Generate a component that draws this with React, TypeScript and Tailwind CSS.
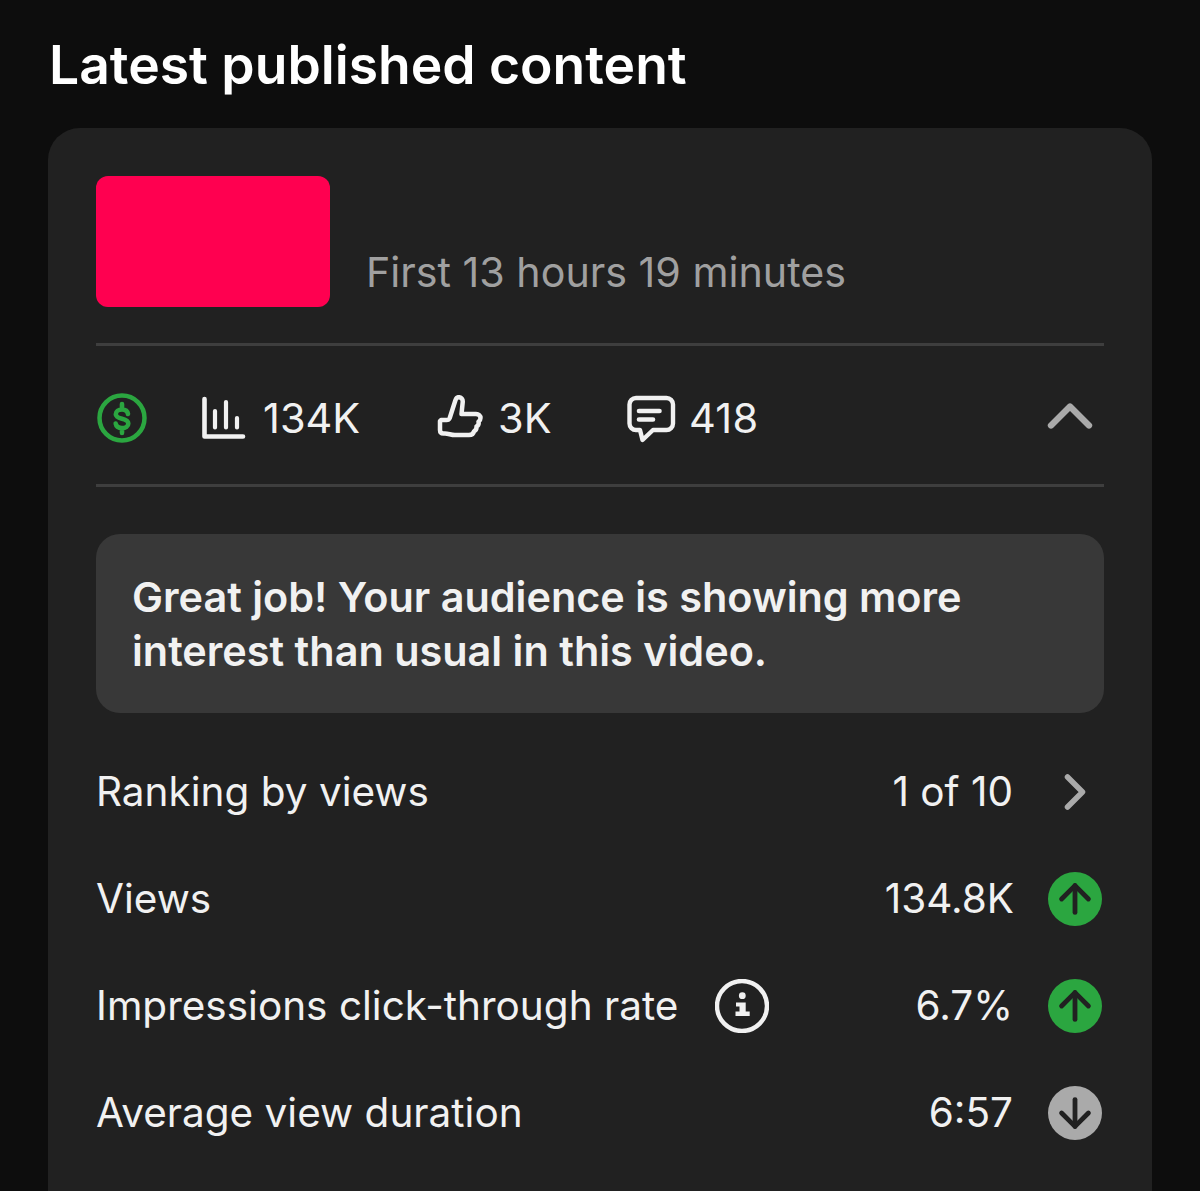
import { ChevronRight, ChevronUp, ArrowUp, ArrowDown } from "lucide-react";

function DollarIcon() {
  return (
    <svg viewBox="0 0 50 50" className="w-[50px] h-[50px]" fill="none">
      <circle cx="25" cy="25" r="22.5" stroke="#2ba640" strokeWidth="4.5" />
      <path
        d="M31 21c-.5-3-3-4.500-6-4.500-3.500 0-6.200 1.800-6.200 4.700 0 2.800 2.500 3.600 6.200 4.500 3.700.9 6.300 1.900 6.300 4.700 0 2.900-2.700 4.600-6.300 4.600-3.200 0-5.800-1.500-6.300-4.400M25 11v5.500M25 35v5"
        stroke="#2ba640"
        strokeWidth="4.600"
        strokeLinecap="round"
      />
    </svg>
  );
}

function BarsIcon() {
  return (
    <svg viewBox="0 0 46 46" className="w-[46px] h-[46px]" fill="none" stroke="#f1f1f1" strokeLinecap="round">
      <path d="M3.500 4v37.500H42" strokeWidth="4.600" strokeLinejoin="round" />
      <path d="M14 16v16.500M25 7v25.500M36 23v9.500" strokeWidth="4.200" />
    </svg>
  );
}

function ThumbIcon() {
  return (
    <svg viewBox="0 0 46 46" className="w-[46px] h-[46px]" fill="none" stroke="#f1f1f1" strokeWidth="4.500" strokeLinejoin="round" strokeLinecap="round">
      <path d="M4 25h5.500c1.500 0 2.700-.8 3.300-2.200L18.500 5c.7-1.800 2-3 3.700-2.800 2.300.3 3.800 2.400 3.500 5L24.500 19H39c2.800 0 4.500 1.700 4.500 4 0 1.800-1 3-2 3.800.5 2-.5 3.800-2 4.700.2 2.200-.8 4-2.500 4.800-.5 2.500-2 3.700-5 3.700H18c-4 0-6.500-1.500-10-1.500H6.500C4 38.500 3 37 3 35V26z" />
    </svg>
  );
}

function CommentIcon() {
  return (
    <svg viewBox="0 0 52 52" className="w-[52px] h-[52px]" fill="none" stroke="#f1f1f1" strokeLinecap="round" strokeLinejoin="round">
      <path
        d="M11 6h30.500a6.500 6.500 0 0 1 6.500 6.500v19a6.500 6.500 0 0 1-6.500 6.500H28L17.500 48 15 38h-4a6.500 6.500 0 0 1-6.500-6.500v-19A6.500 6.500 0 0 1 11 6z"
        strokeWidth="4.400"
      />
      <path d="M14 19h20.500M14 27.500h14" strokeWidth="4.600" />
    </svg>
  );
}

function InfoIcon() {
  return (
    <svg viewBox="0 0 54 54" className="w-[54px] h-[54px]" fill="none">
      <circle cx="27" cy="27" r="25" stroke="#f1f1f1" strokeWidth="4.400" />
      <circle cx="27.300" cy="16.700" r="3.400" fill="#f1f1f1" />
      <path d="M21 23.500h9.700v9h4v4.500H20.500v-4.500h4v-5H21z" fill="#f1f1f1" />
    </svg>
  );
}

function Trend({ up }: { up: boolean }) {
  return (
    <div className={`w-[54px] h-[54px] rounded-full flex items-center justify-center ${up ? "bg-[#2ba640]" : "bg-[#aaaaaa]"}`}>
      {up ? (
        <ArrowUp className="w-[46px] h-[46px] text-[#212121]" strokeWidth={2.500} />
      ) : (
        <ArrowDown className="w-[46px] h-[46px] text-[#212121]" strokeWidth={2.500} />
      )}
    </div>
  );
}

export default function App() {
  return (
    <div className="h-[1191px] overflow-hidden bg-[#0d0d0d] font-['Inter',sans-serif] text-[#f1f1f1]">
      <h1 className="pl-[49px] pt-[30px] h-[128px] text-[53.4px] leading-[70px] font-semibold text-white">
        Latest published content
      </h1>

      <div className="mx-[48px] rounded-[32px] bg-[#212121] px-[48px] pt-[48px] pb-[60px]">
        {/* Video header */}
        <div className="flex items-end gap-[36px] pb-[36px] border-b-[3px] border-[#3e3e3e]">
          <div className="w-[234px] h-[131px] rounded-[12px] bg-[#ff0050]" />
          <span className="text-[41.2px] leading-[50px] mb-[10px] text-[#a0a0a0]">First 13 hours 19 minutes</span>
        </div>

        {/* Stats row */}
        <div className="h-[141px] pt-[6px] flex items-center border-b-[3px] border-[#3e3e3e] text-[41.5px]">
          <div className="ml-[1px] w-[104px]">
            <DollarIcon />
          </div>
          <div className="flex items-center gap-[16px] w-[236px]">
            <BarsIcon />
            <span>134K</span>
          </div>
          <div className="flex items-center gap-[15px] w-[188px]">
            <ThumbIcon />
            <span>3K</span>
          </div>
          <div className="flex items-center gap-[12px]">
            <CommentIcon />
            <span className="tracking-[0.3px]">418</span>
          </div>
          <ChevronUp className="ml-auto -mr-[4px] -mt-[4px] w-[76px] h-[76px] text-[#aaaaaa]" strokeWidth={2} />
        </div>

        {/* Insight */}
        <div className="mt-[47px] rounded-[24px] bg-[#383838] px-[36px] py-[36px] text-[41.4px] leading-[54px] font-semibold h-[179px]">
          Great job! Your audience is showing more
          <br />
          interest than usual in this video.
        </div>

        {/* Metrics */}
        <div className="mt-[25px] text-[40.5px] [&_span]:pt-[2px]">
          <div className="h-[107px] flex items-center">
            <span>Ranking by views</span>
            <span className="ml-auto mr-[35px]">1 of 10</span>
            <div className="w-[54px] mr-[2px] flex justify-center">
              <ChevronRight className="w-[60px] h-[60px] shrink-0 text-[#aaaaaa]" strokeWidth={2.200} />
            </div>
          </div>
          <div className="h-[107px] flex items-center">
            <span>Views</span>
            <span className="ml-auto mr-[34px]">134.8K</span>
            <div className="mr-[2px]">
              <Trend up />
            </div>
          </div>
          <div className="h-[107px] flex items-center">
            <span>Impressions click-through rate</span>
            <div className="ml-[37px]">
              <InfoIcon />
            </div>
            <span className="ml-auto mr-[35px]">6.7%</span>
            <div className="mr-[2px]">
              <Trend up />
            </div>
          </div>
          <div className="h-[107.500px] flex items-center">
            <span>Average view duration</span>
            <span className="ml-auto mr-[35px]">6:57</span>
            <div className="mr-[2px]">
              <Trend up={false} />
            </div>
          </div>
        </div>
      </div>
    </div>
  );
}
